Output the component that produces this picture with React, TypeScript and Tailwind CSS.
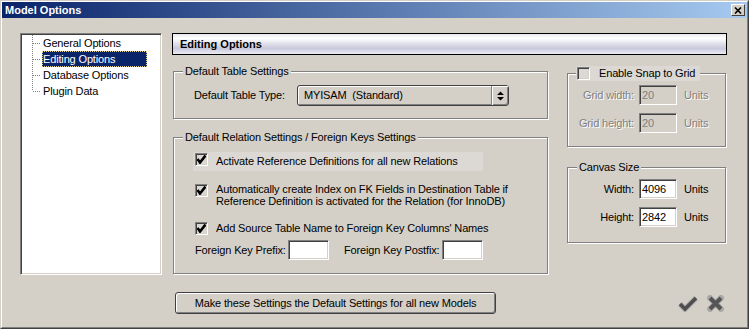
import type { ReactNode } from 'react'

const sunken =
  'border border-t-[#808080] border-l-[#808080] border-r-white border-b-white shadow-[inset_1px_1px_0_#404040,inset_-1px_-1px_0_#d4d0c8]'

function CheckBox({ checked }: { checked?: boolean }) {
  return (
    <div className={`w-[13px] h-[13px] shrink-0 bg-[#dcd9d4] ${sunken} flex items-center justify-center`}>
      {checked && (
        <svg width="9" height="9" viewBox="0 0 9 9">
          <path d="M0.5 4 L3 7.5 L8.5 0.5" fill="none" stroke="#000" strokeWidth="2.6" />
        </svg>
      )}
    </div>
  )
}

function Field({ value, disabled, w = 'w-[38px]' }: { value?: string; disabled?: boolean; w?: string }) {
  return (
    <div
      className={`${w} h-[20px] shrink-0 ${sunken} pl-[2px] leading-[18px] ${
        disabled ? 'bg-[#d4d0c8] text-[#808080]' : 'bg-white text-black'
      }`}
    >
      {value}
    </div>
  )
}

function GroupBox({ label, className, children }: { label: ReactNode; className: string; children: ReactNode }) {
  return (
    <div className={`relative border border-[#808080] shadow-[inset_1px_1px_0_#fff,1px_1px_0_#fff] ${className}`}>
      {label}
      {children}
    </div>
  )
}

function Legend({ text }: { text: string }) {
  return (
    <div className="absolute -top-[7px] left-[9px] bg-[#d4d0c8] px-[2px] leading-[13px] whitespace-nowrap">{text}</div>
  )
}

function UnitRow({ label, value, disabled }: { label: string; value: string; disabled?: boolean }) {
  const dim = disabled ? 'text-[#808080] [text-shadow:1px_1px_0_#fff]' : 'text-black'
  return (
    <div className="flex items-center h-[20px]">
      <span className={`w-[66px] text-right whitespace-nowrap ${dim}`}>{label}</span>
      <div className="ml-[5px]">
        <Field value={value} disabled={disabled} />
      </div>
      <span className={`ml-[7px] ${dim}`}>Units</span>
    </div>
  )
}

const treeItems = ['General Options', 'Editing Options', 'Database Options', 'Plugin Data']

export default function App() {
  return (
    <div className="w-[749px] h-[329px] overflow-hidden bg-[#d4d0c8] border border-t-[#d4d0c8] border-l-[#d4d0c8] border-r-[#404040] border-b-[#404040] font-['Liberation_Sans',Arial,sans-serif] text-[11px] tracking-[-0.15px] text-black">
      <div className="h-full flex flex-col border border-t-white border-l-white border-r-[#808080] border-b-[#808080]">
        {/* title bar */}
        <div className="h-[16px] flex items-center justify-between bg-[linear-gradient(to_right,#0a246a,#a6caf0)] pl-[3px] pr-[2px]">
          <span className="text-white font-bold tracking-normal leading-[16px]">Model Options</span>
          <div className="w-[14px] h-[12px] bg-[#d4d0c8] border border-t-white border-l-white border-r-[#404040] border-b-[#404040] flex items-center justify-center">
            <svg width="8" height="7" viewBox="0 0 8 7">
              <path d="M1 0.5 L7 6.5 M7 0.5 L1 6.5" stroke="#000" strokeWidth="1.6" />
            </svg>
          </div>
        </div>

        <div className="flex">
          {/* tree */}
          <div className={`ml-[18px] mt-[15px] w-[142px] h-[242px] bg-white ${sunken} pt-[1px] pl-px`}>
            {treeItems.map((t, i) => (
              <div key={t} className="flex h-[16px] items-center">
                <svg width="20" height="16" className="shrink-0">
                  <line
                    x1="10.5"
                    y1="0"
                    x2="10.5"
                    y2={i === treeItems.length - 1 ? 8 : 16}
                    stroke="#808080"
                    strokeDasharray="1 1"
                  />
                  <line x1="11" y1="8.5" x2="19" y2="8.5" stroke="#808080" strokeDasharray="1 1" />
                </svg>
                {i === 1 ? (
                  <span className="w-[105px] leading-[14px] border border-dotted border-[#e4d28a] bg-[#0a246a] text-white">
                    {t}
                  </span>
                ) : (
                  <span className="leading-[14px] border border-transparent">{t}</span>
                )}
              </div>
            ))}
          </div>

          {/* right side */}
          <div className="ml-[10px] mt-[15px] flex flex-col">
            <div className="w-[555px] h-[22px] flex items-center border border-black pl-[7px] font-bold tracking-normal bg-[linear-gradient(to_bottom,#e9e9f0_0%,#ffffff_22%,#e4e4ee_45%,#c9c9dc_72%,#ececf4_100%)]">
              Editing Options
            </div>

            <div className="flex">
              <div className="ml-[1px] mt-[16px] flex flex-col">
                <GroupBox label={<Legend text="Default Table Settings" />} className="w-[375px] h-[48px] pt-[13px] pl-[20px]">
                  <div className="flex items-center">
                    <span className="w-[103px] whitespace-nowrap">Default Table Type:</span>
                    <div className="w-[212px] h-[21px] flex rounded-[3px] border border-[#404040] bg-[#d4d0c8] shadow-[inset_1px_1px_0_#fff,inset_-1px_-1px_0_#808080]">
                      <span className="flex-1 pl-[6px] leading-[19px] whitespace-pre">MYISAM  (Standard)</span>
                      <div className="w-[17px] border-l border-[#808080] shadow-[inset_1px_1px_0_#fff] flex items-center justify-center">
                        <svg width="7" height="10" viewBox="0 0 7 10">
                          <path d="M3.5 0.5 L7 4 L0 4 Z M0 6 L7 6 L3.5 9.5 Z" fill="#000" />
                        </svg>
                      </div>
                    </div>
                  </div>
                </GroupBox>

                <GroupBox
                  label={<Legend text="Default Relation Settings / Foreign Keys Settings" />}
                  className="mt-[18px] w-[375px] h-[137px] pt-[14px] flex flex-col"
                >
                  <div className="ml-[19px] w-[290px] h-[19px] bg-[#dcd9d4] flex items-start pl-[2px]">
                    <div className="mt-[1px]">
                      <CheckBox checked />
                    </div>
                    <span className="ml-[8px] mt-[3px] leading-[13px] whitespace-nowrap">
                      Activate Reference Definitions for all new Relations
                    </span>
                  </div>
                  <div className="ml-[21px] mt-[12px] flex items-start">
                    <div className="mt-[1px]">
                      <CheckBox checked />
                    </div>
                    <span className="ml-[8px] leading-[12px] whitespace-nowrap">
                      Automatically create Index on FK Fields in Destination Table if
                      <br />
                      Reference Definition is activated for the Relation (for InnoDB)
                    </span>
                  </div>
                  <div className="ml-[21px] mt-[14px] flex items-start">
                    <div className="mt-[1px]">
                      <CheckBox checked />
                    </div>
                    <span className="ml-[8px] mt-[1px] leading-[13px] whitespace-nowrap">
                      Add Source Table Name to Foreign Key Columns' Names
                    </span>
                  </div>
                  <div className="ml-[21px] mt-[5px] flex items-center">
                    <span className="w-[93px] whitespace-nowrap">Foreign Key Prefix:</span>
                    <Field w="w-[41px]" />
                    <span className="ml-[15px] w-[98px] whitespace-nowrap">Foreign Key Postfix:</span>
                    <Field w="w-[41px]" />
                  </div>
                </GroupBox>
              </div>

              <div className="ml-[19px] mt-[18px] flex flex-col">
                <GroupBox
                  label={
                    <div className="absolute -top-[8px] left-[8px] h-[15px] flex items-center bg-[#dcd9d4] pl-[1px] pr-[5px]">
                      <CheckBox />
                      <span className="ml-[9px] leading-[13px] whitespace-nowrap">Enable Snap to Grid</span>
                    </div>
                  }
                  className="w-[159px] h-[74px] pt-[11px] flex flex-col gap-[8px]"
                >
                  <UnitRow label="Grid width:" value="20" disabled />
                  <UnitRow label="Grid height:" value="20" disabled />
                </GroupBox>

                <GroupBox label={<Legend text="Canvas Size" />} className="mt-[20px] w-[159px] h-[76px] pt-[11px] flex flex-col gap-[8px]">
                  <UnitRow label="Width:" value="4096" />
                  <UnitRow label="Height:" value="2842" />
                </GroupBox>
              </div>
            </div>

            <div className="mt-[18px] flex items-center">
              <button className="ml-[3px] w-[321px] h-[22px] rounded-[3px] border border-[#404040] bg-[#d4d0c8] shadow-[inset_1px_1px_0_#fff,inset_-1px_-1px_0_#808080] leading-[20px] whitespace-nowrap">
                Make these Settings the Default Settings for all new Models
              </button>
              <svg width="20" height="17" viewBox="0 0 20 17" className="ml-[182px]">
                <path d="M2 9 L7 14 L18 3" fill="none" stroke="#a8a8a8" strokeWidth="5.5" strokeLinejoin="round" />
                <path d="M2 9 L7 14 L18 3" fill="none" stroke="#4e4e4e" strokeWidth="3.5" />
              </svg>
              <svg width="17" height="17" viewBox="0 0 17 17" className="ml-[9px]">
                <path d="M3 3 L14 14 M14 3 L3 14" stroke="#a8a8a8" strokeWidth="6" strokeLinecap="round" />
                <path d="M3 3 L14 14 M14 3 L3 14" stroke="#555" strokeWidth="4" />
              </svg>
            </div>
          </div>
        </div>
      </div>
    </div>
  )
}
